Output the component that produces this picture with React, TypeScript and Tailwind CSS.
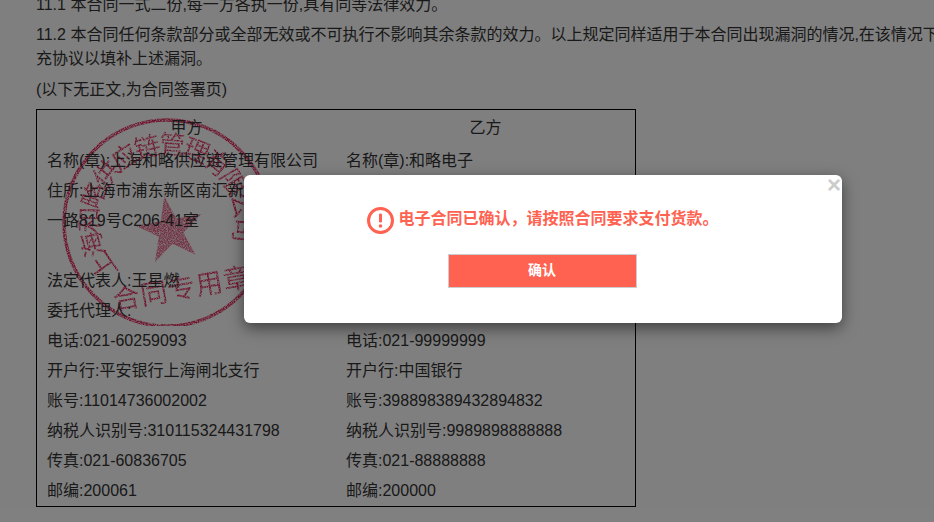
import React from 'react';

const rows: [string, string][] = [
  ['名称(章):上海和略供应链管理有限公司', '名称(章):和略电子'],
  ['住所:上海市浦东新区南汇新城镇环湖西', '住所:上海市浦东新区'],
  ['一路819号C206-41室', ''],
  ['', ''],
  ['法定代表人:王星燃', '法定代表人:'],
  ['委托代理人:', '委托代理人:'],
  ['电话:021-60259093', '电话:021-99999999'],
  ['开户行:平安银行上海闸北支行', '开户行:中国银行'],
  ['账号:11014736002002', '账号:398898389432894832'],
  ['纳税人识别号:310115324431798', '纳税人识别号:9989898888888'],
  ['传真:021-60836705', '传真:021-88888888'],
  ['邮编:200061', '邮编:200000'],
];

const Seal: React.FC = () => (
  <svg width="212" height="212" viewBox="0 0 212 212" className="absolute left-[25px] top-[8px]">
    <defs>
      <filter id="grain" x="0" y="0" width="100%" height="100%">
        <feTurbulence type="fractalNoise" baseFrequency="0.9" numOctaves="2" seed="4" result="noise" />
        <feColorMatrix in="noise" type="matrix" values="0 0 0 0 0  0 0 0 0 0  0 0 0 0 0  0 0 0 -2.2 1.8" result="mask" />
        <feComposite in="SourceGraphic" in2="mask" operator="in" />
      </filter>
      <path id="sealArc" d="M50 144 A68 68 0 1 1 160 144" />
    </defs>
    <g filter="url(#grain)" fill="#e0285a" style={{ fontFamily: '"Noto Sans CJK SC", sans-serif' }}>
      <circle cx="105" cy="105" r="103" fill="none" stroke="#e0285a" strokeWidth="3.5" />
      <g transform="rotate(-10 105 105)">
        <text fontSize="26" textLength="288">
          <textPath href="#sealArc">上海和略供应链管理有限公司</textPath>
        </text>
        <polygon
          transform="translate(107 113)"
          points="0,-35 7.8,-10.8 33.3,-10.8 12.6,4.1 20.6,28.3 0,13.4 -20.6,28.3 -12.6,4.1 -33.3,-10.8 -7.8,-10.8"
          fill="#e8688c"
        />
      </g>
      <text x="120" y="180" fontSize="27" textAnchor="middle" letterSpacing="1" transform="rotate(-10 120 170)">
        合同专用章
      </text>
    </g>
  </svg>
);

const AlertIcon: React.FC = () => (
  <svg width="27" height="27" viewBox="0 0 27 27" className="shrink-0">
    <circle cx="13.5" cy="13.5" r="12" fill="none" stroke="#ff6250" strokeWidth="3" />
    <rect x="12" y="6.5" width="3" height="9" rx="1.2" fill="#ff6250" />
    <circle cx="13.5" cy="19" r="1.8" fill="#ff6250" />
  </svg>
);

export default function App() {
  return (
    <div className="relative h-[522px] w-[934px] overflow-hidden bg-white text-[16px] leading-[24px] text-[#333] font-['Liberation_Sans','Noto_Sans_CJK_SC',sans-serif]">
      <div className="-mt-[7px] pl-[36px]">
        <p className="mb-[6px] whitespace-nowrap">11.1 本合同一式二份,每一方各执一份,具有同等法律效力。</p>
        <p className="mb-[7px] whitespace-nowrap">
          11.2 本合同任何条款部分或全部无效或不可执行不影响其余条款的效力。以上规定同样适用于本合同出现漏洞的情况,在该情况下
          <br />
          充协议以填补上述漏洞。
        </p>
        <p className="mb-[7px]">(以下无正文,为合同签署页)</p>

        <div className="relative h-[398px] w-[600px] border border-black">
          <Seal />
          <div className="relative grid grid-cols-[299px_1fr]">
            <div className="flex h-[36px] items-center justify-center pb-[1px]">甲方</div>
            <div className="flex h-[36px] items-center justify-center pb-[1px]">乙方</div>
            {rows.map(([left, right], i) => (
              <React.Fragment key={i}>
                <div className="flex h-[30px] items-center whitespace-nowrap pl-[10px]">{left}</div>
                <div className="flex h-[30px] items-center whitespace-nowrap pl-[10px]">{right}</div>
              </React.Fragment>
            ))}
          </div>
        </div>
      </div>

      {/* mask + dialog */}
      <div className="absolute inset-0 bg-black/50" />
      <div className="absolute left-[244px] top-[175px] flex h-[148px] w-[598px] flex-col items-center rounded-[6px] bg-white pt-[32px] shadow-[0_5px_15px_rgba(0,0,0,0.5)]">
        <span className="absolute right-[1px] top-[-2px] text-[24px] font-bold leading-[24px] text-[#ccc]">×</span>
        <div className="flex items-start gap-[4px]">
          <AlertIcon />
          <span className="text-[16px] font-bold leading-[24px] text-[#ff6250]">电子合同已确认，请按照合同要求支付货款。</span>
        </div>
        <button className="mr-[2px] mt-[20px] h-[34px] w-[189px] border border-[#ccc] bg-[#ff6250] pb-[3px] text-[14px] font-bold text-white">
          确认
        </button>
      </div>
    </div>
  );
}
